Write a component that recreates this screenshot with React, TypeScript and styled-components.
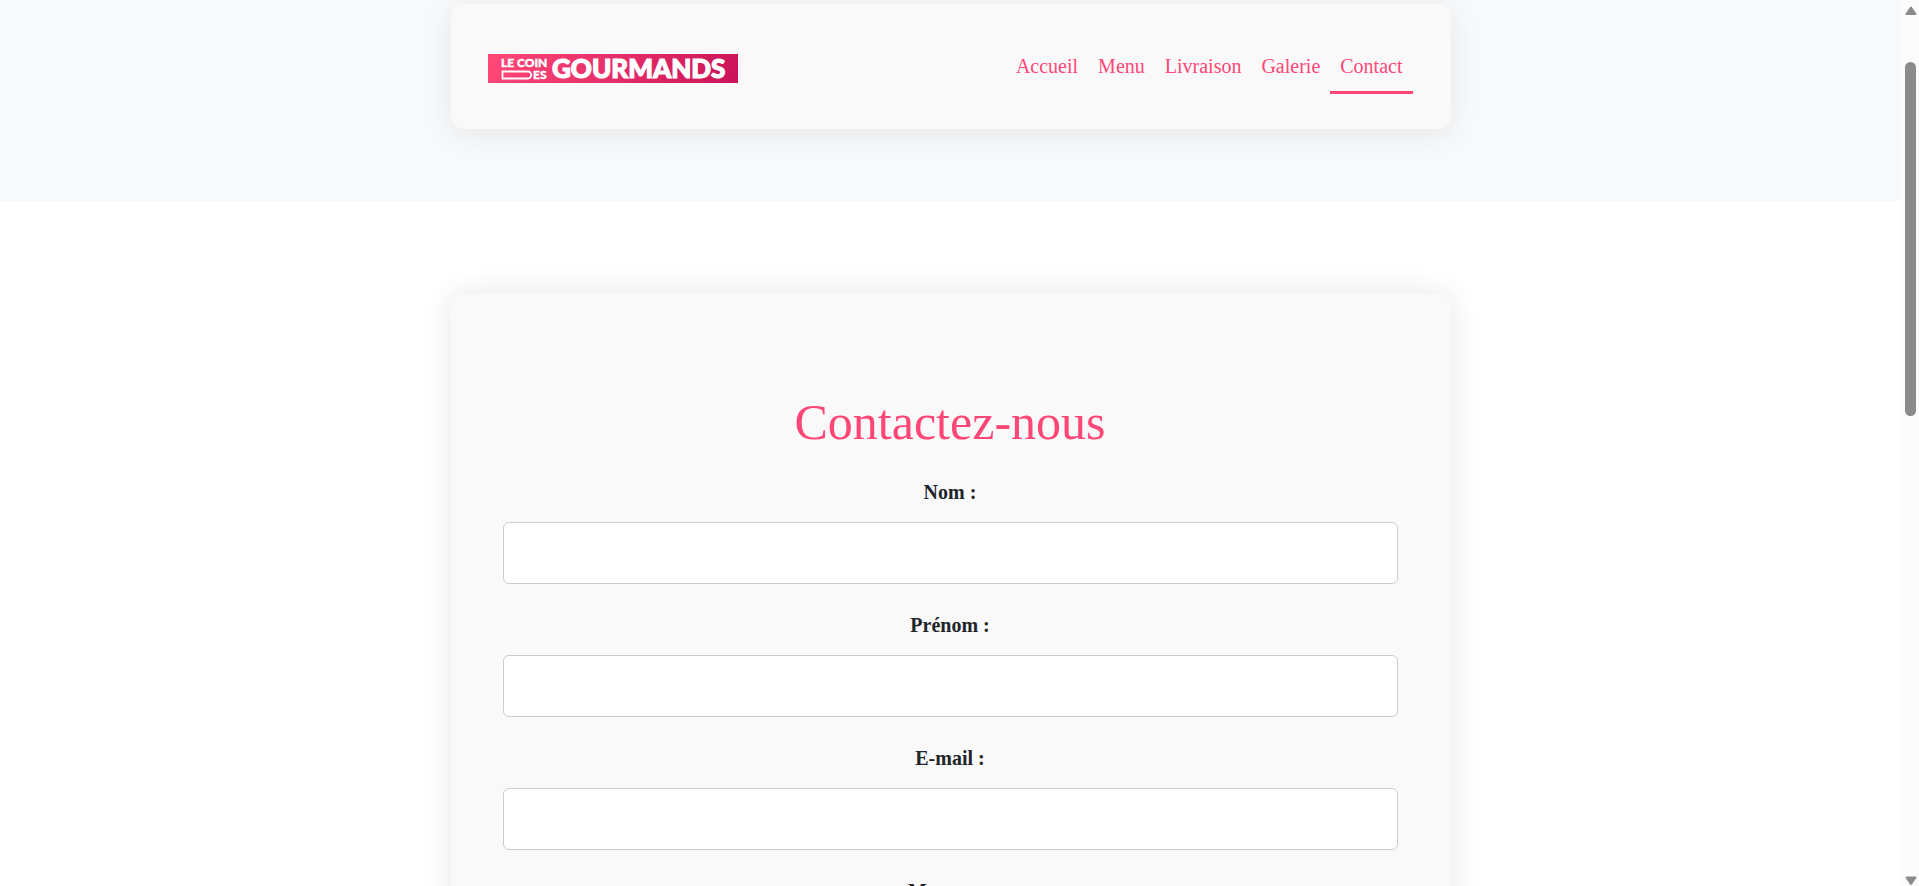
import React from "react";
import styled, { createGlobalStyle } from "styled-components";

const PINK = "#ff4777";

const GlobalStyle = createGlobalStyle`
  *, *::before, *::after { box-sizing: border-box; }
  body {
    margin: 0;
    background: #fff;
    color: #212529;
    font-family: "Times New Roman", "Liberation Serif", serif;
    font-size: 20px;
    line-height: 30px;
  }
`;

const Shell = styled.div`
  display: grid;
  grid-template-columns: minmax(0, 1fr) 18px;
  height: 100vh;
  overflow: hidden;
`;

const Page = styled.div`
  overflow: hidden;
`;

const Header = styled.header`
  padding: 4px 24px 72px;
  background: #f8f9fb;
`;

const Card = styled.div`
  max-width: 1000px;
  margin: 0 auto;
  background: #f9f9f9;
  border-radius: 12px;
  box-shadow: 0 0 30px rgba(0, 0, 0, 0.1);
`;

const NavCard = styled(Card)`
  display: flex;
  align-items: center;
  justify-content: space-between;
  padding: 35px 38px 35px 37px;
  box-shadow: 0 4px 30px rgba(0, 0, 0, 0.08);
`;

const Brand = styled.a`
  display: block;
  padding-top: 4px;

  svg {
    display: block;
  }
`;

const LogoText = styled.text`
  font-family: Lato, sans-serif;
  font-weight: 900;
  fill: #fff;
  stroke: #fff;
`;

const NavList = styled.ul`
  display: flex;
  margin: 0;
  padding: 0;
  list-style: none;
`;

const NavLink = styled.a<{ $active?: boolean }>`
  display: block;
  padding: 12px 10px 10px;
  border-bottom: 3px solid ${(p) => (p.$active ? PINK : "transparent")};
  color: ${PINK};
  text-decoration: none;
`;

const Main = styled.main`
  padding: 93px 24px;
`;

const FormCard = styled(Card)`
  padding: 97px 53px 97px 52px;
`;

const Title = styled.h1`
  margin: 0 0 24px;
  color: ${PINK};
  font-size: 50px;
  font-weight: 400;
  line-height: 62px;
  text-align: center;
`;

const Field = styled.div`
  display: flex;
  flex-direction: column;
  gap: 15px;
  margin-bottom: 26px;
`;

const Label = styled.label`
  font-weight: 700;
  text-align: center;
`;

const fieldBox = `
  width: 100%;
  padding: 12px;
  border: 1px solid #ccc;
  border-radius: 6px;
  background: #fff;
  font: inherit;
`;

const Input = styled.input`
  ${fieldBox}
  height: 62px;
`;

const TextArea = styled.textarea`
  ${fieldBox}
  height: 160px;
`;

const ScrollTrack = styled.div`
  display: flex;
  flex-direction: column;
  align-items: center;
  padding: 6px 0 0 1px;
  background: #fcfcfc;
`;

const ScrollThumb = styled.div`
  width: 11px;
  height: 40vh;
  margin: 46px 0 auto;
  border-radius: 6px;
  background: #8b8b8b;
`;

function Logo() {
  return (
    <svg width="250" height="29" viewBox="0 0 250 29" role="img" aria-label="Le Coin des Gourmands">
      <defs>
        <linearGradient id="brand" gradientUnits="userSpaceOnUse" x1="10" y1="-20" x2="240" y2="45">
          <stop offset="0" stopColor="#ff4777" />
          <stop offset="1" stopColor="#cc145a" />
        </linearGradient>
      </defs>
      <rect width="250" height="29" fill="url(#brand)" />
      <LogoText x="13" y="13" fontSize="12" strokeWidth="0.4">LE COIN</LogoText>
      <path d="M14.5 17.5H40a3.2 3.5 0 0 1 0 7H14.5Z" fill="none" stroke="#fff" strokeWidth="1.8" />
      <LogoText x="45" y="25" fontSize="12" strokeWidth="0.4">ES</LogoText>
      <LogoText x="64" y="24" fontSize="26" strokeWidth="1.2">GOURMANDS</LogoText>
    </svg>
  );
}

function Arrow({ down = false }: { down?: boolean }) {
  return (
    <svg width="12" height="10" viewBox="0 0 12 10" aria-hidden="true">
      <path
        d={down ? "M1.5 1.5h9L6 8Z" : "M1.5 8h9L6 1.5Z"}
        fill="#8b8b8b"
        stroke="#8b8b8b"
        strokeWidth="2"
        strokeLinejoin="round"
      />
    </svg>
  );
}

const links = ["Accueil", "Menu", "Livraison", "Galerie", "Contact"];

const fields = [
  { id: "nom", label: "Nom :", type: "text" },
  { id: "prenom", label: "Prénom :", type: "text" },
  { id: "email", label: "E-mail :", type: "email" },
];

export default function App() {
  return (
    <>
      <GlobalStyle />
      <Shell>
        <Page>
          <Header>
            <NavCard as="nav">
              <Brand href="#accueil">
                <Logo />
              </Brand>
              <NavList>
                {links.map((name) => (
                  <li key={name}>
                    <NavLink href={`#${name.toLowerCase()}`} $active={name === "Contact"}>
                      {name}
                    </NavLink>
                  </li>
                ))}
              </NavList>
            </NavCard>
          </Header>
          <Main>
            <FormCard as="form">
              <Title>Contactez-nous</Title>
              {fields.map((f) => (
                <Field key={f.id}>
                  <Label htmlFor={f.id}>{f.label}</Label>
                  <Input id={f.id} name={f.id} type={f.type} />
                </Field>
              ))}
              <Field>
                <Label htmlFor="message">Message :</Label>
                <TextArea id="message" name="message" />
              </Field>
            </FormCard>
          </Main>
        </Page>
        <ScrollTrack aria-hidden="true">
          <Arrow />
          <ScrollThumb />
          <Arrow down />
        </ScrollTrack>
      </Shell>
    </>
  );
}
